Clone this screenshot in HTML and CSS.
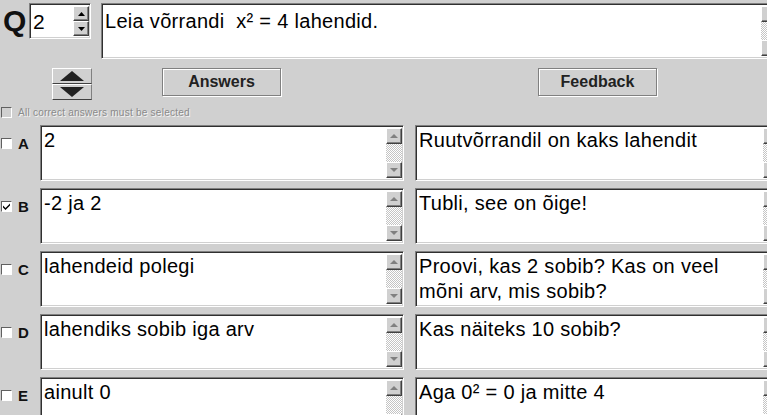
FILE: index.html
```html
<!DOCTYPE html>
<html lang="et">
<head>
    <meta charset="UTF-8">
    <title>Quiz editor</title>
    <link rel="stylesheet" href="styles.css">
</head>
<body>
    <div class="editor">
        <!-- question number and text -->
        <div class="top">
            <span class="q-label">Q</span>
            <div class="spinner inset">
                <span class="spin-value">2</span>
                <div class="spin-btns">
                    <span class="sb-btn"><svg width="7" height="4" viewBox="0 0 7 4"><path d="M3.5 0L7 4H0z" fill="#000"/></svg></span>
                    <span class="sb-btn"><svg width="7" height="4" viewBox="0 0 7 4"><path d="M0 0h7L3.5 4z" fill="#000"/></svg></span>
                </div>
            </div>
            <div class="box inset question">
                <div class="text">Leia võrrandi&nbsp; x² = 4 lahendid.</div>
                <div class="scroll">
                    <span class="sb-btn"></span>
                    <span class="sb-btn"></span>
                </div>
            </div>
        </div>

        <div class="controls">
            <div class="updown">
                <span class="ud-btn"><svg width="24" height="10" viewBox="0 0 24 10"><path d="M12 0L24 10H0z" fill="#222"/></svg></span>
                <span class="ud-btn"><svg width="24" height="10" viewBox="0 0 24 10"><path d="M0 0h24L12 10z" fill="#222"/></svg></span>
            </div>
            <span class="btn answers-btn">Answers</span>
            <span class="btn feedback-btn">Feedback</span>
        </div>

        <div class="must">
            <span class="check disabled"></span>
            <span class="must-text">All correct answers must be selected</span>
        </div>

        <div class="rows">
            <div class="row">
                <div class="mark"><span class="check"></span><span class="letter">A</span></div>
                <div class="box inset answer">
                    <div class="text">2</div>
                    <div class="scroll"><span class="sb-btn up"></span><span class="sb-btn down"></span></div>
                </div>
                <div class="box inset feedback">
                    <div class="text">Ruutvõrrandil on kaks lahendit</div>
                    <div class="scroll"><span class="sb-btn up"></span><span class="sb-btn down"></span></div>
                </div>
            </div>
            <div class="row">
                <div class="mark"><span class="check checked"><svg width="7" height="7" viewBox="0 0 7 7"><path d="M0 2.5l2.5 2.5 4.5-4.5v2l-4.5 4.5-2.5-2.5z" fill="#000"/></svg></span><span class="letter">B</span></div>
                <div class="box inset answer">
                    <div class="text">-2 ja 2</div>
                    <div class="scroll"><span class="sb-btn up"></span><span class="sb-btn down"></span></div>
                </div>
                <div class="box inset feedback">
                    <div class="text">Tubli, see on õige!</div>
                    <div class="scroll"><span class="sb-btn up"></span><span class="sb-btn down"></span></div>
                </div>
            </div>
            <div class="row">
                <div class="mark"><span class="check"></span><span class="letter">C</span></div>
                <div class="box inset answer">
                    <div class="text">lahendeid polegi</div>
                    <div class="scroll"><span class="sb-btn up"></span><span class="sb-btn down"></span></div>
                </div>
                <div class="box inset feedback">
                    <div class="text">Proovi, kas 2 sobib? Kas on veel mõni arv, mis sobib?</div>
                    <div class="scroll"><span class="sb-btn up"></span><span class="sb-btn down"></span></div>
                </div>
            </div>
            <div class="row">
                <div class="mark"><span class="check"></span><span class="letter">D</span></div>
                <div class="box inset answer">
                    <div class="text">lahendiks sobib iga arv</div>
                    <div class="scroll"><span class="sb-btn up"></span><span class="sb-btn down"></span></div>
                </div>
                <div class="box inset feedback">
                    <div class="text">Kas näiteks 10 sobib?</div>
                    <div class="scroll"><span class="sb-btn up"></span><span class="sb-btn down"></span></div>
                </div>
            </div>
            <div class="row">
                <div class="mark"><span class="check"></span><span class="letter">E</span></div>
                <div class="box inset answer">
                    <div class="text">ainult 0</div>
                    <div class="scroll"><span class="sb-btn up"></span><span class="sb-btn down"></span></div>
                </div>
                <div class="box inset feedback">
                    <div class="text">Aga 0² = 0 ja mitte 4</div>
                    <div class="scroll"><span class="sb-btn up"></span><span class="sb-btn down"></span></div>
                </div>
            </div>
        </div>
    </div>
</body>
</html>
```

FILE: styles.css
```css
/* Page */
html, body {
    margin: 0;
    height: 100%;
    overflow: hidden;
}

body {
    background-color: #d0d0d0;
    font-family: "Liberation Sans", Arial, sans-serif;
    color: #000;
}

/* the window is narrower than the form, the right side is cut off */
.editor {
    width: 767px;
    height: 415px;
    box-sizing: border-box;
    padding-top: 3px;
    overflow: hidden;
}

/* Sunken field look */
.inset {
    box-sizing: border-box;
    flex-shrink: 0;
    background-color: #fff;
    border: 1px solid;
    border-color: #808080 #fff #fff #808080;
    box-shadow: inset 1px 1px 0 #303030, inset -1px -1px 0 #d0d0d0;
}

/* Top row */
.top {
    display: flex;
    align-items: flex-start;
    height: 56px;
}

.q-label {
    flex-shrink: 0;
    width: 26px;
    padding-left: 3px;
    font-size: 30px;
    font-weight: bold;
    line-height: 36px;
    color: #111;
}

.spinner {
    display: flex;
    width: 62px;
    height: 36px;
    padding: 2px 1px 2px 2px;
}

.spin-value {
    flex: 1;
    font-size: 21px;
    line-height: 32px;
    padding-left: 1px;
}

.spin-btns {
    display: flex;
    flex-direction: column;
    width: 16px;
}

.spin-btns .sb-btn {
    flex: 1;
    height: auto;
}

.question {
    margin-left: 10px;
    width: 678px;
    height: 56px;
}

.question .text {
    padding-top: 3px;
}

/* Box with text and scrollbar */
.box {
    display: flex;
    padding: 2px 1px 2px 2px;
}

.box .text {
    flex: 1;
    font-size: 20px;
    letter-spacing: 0.3px;
    line-height: 25px;
    padding-left: 1px;
    white-space: pre-wrap;
}

.scroll {
    flex-shrink: 0;
    width: 16px;
    display: flex;
    flex-direction: column;
    justify-content: space-between;
    background: repeating-conic-gradient(#fff 0 25%, #c4c4c4 0 50%) 0 0 / 2px 2px;
}

.sb-btn {
    box-sizing: border-box;
    display: flex;
    align-items: center;
    justify-content: center;
    width: 16px;
    height: 16px;
    background-color: #d0d0d0;
    border: 1px solid;
    border-color: #fff #404040 #404040 #fff;
    box-shadow: inset -1px -1px 0 #808080;
}

.sb-btn.up::before,
.sb-btn.down::before {
    content: "";
    border-left: 4px solid transparent;
    border-right: 4px solid transparent;
}

.sb-btn.up::before {
    border-bottom: 4px solid #808080;
}

.sb-btn.down::before {
    border-top: 4px solid #808080;
}

/* Controls */
.controls {
    display: flex;
    align-items: flex-start;
    margin-top: 9px;
    padding-left: 52px;
}

.updown {
    display: flex;
    flex-direction: column;
    width: 40px;
}

.ud-btn {
    box-sizing: border-box;
    display: flex;
    align-items: center;
    justify-content: center;
    height: 16px;
    border: 1px solid;
    border-color: #fff #808080 #404040 #fff;
}

.btn {
    box-sizing: border-box;
    flex-shrink: 0;
    width: 119px;
    height: 28px;
    text-align: center;
    font-size: 16px;
    font-weight: bold;
    line-height: 26px;
    color: #222;
    border: 1px solid #808080;
    box-shadow: 1px 1px 0 #fff, inset 1px 1px 0 #fff;
}

.answers-btn {
    margin-left: 70px;
}

.feedback-btn {
    margin-left: 257px;
}

/* All correct answers checkbox */
.must {
    display: flex;
    align-items: center;
    margin-top: 6px;
    padding-left: 1px;
    height: 12px;
}

.must-text {
    margin-left: 6px;
    font-size: 10px;
    letter-spacing: 0.25px;
    color: #8a8a8a;
    text-shadow: 1px 1px 0 #f4f4f4;
}

.check {
    box-sizing: border-box;
    display: flex;
    align-items: center;
    justify-content: center;
    width: 11px;
    height: 11px;
    background-color: #fff;
    border: 1px solid;
    border-color: #606060 #fff #fff #606060;
}

.check.disabled {
    background-color: #d0d0d0;
}

/* Answer rows */
.rows {
    display: flex;
    flex-direction: column;
    gap: 7px;
    margin-top: 7px;
}

.row {
    display: flex;
    flex-shrink: 0;
    height: 56px;
}

.mark {
    display: flex;
    align-items: center;
    flex-shrink: 0;
    width: 40px;
    height: 11px;
    margin-top: 13px;
    padding-left: 1px;
    box-sizing: border-box;
}

.letter {
    margin-left: 6px;
    font-size: 15px;
    font-weight: bold;
    color: #111;
}

.answer {
    width: 364px;
}

.feedback {
    width: 366px;
    margin-left: 11px;
}
```
